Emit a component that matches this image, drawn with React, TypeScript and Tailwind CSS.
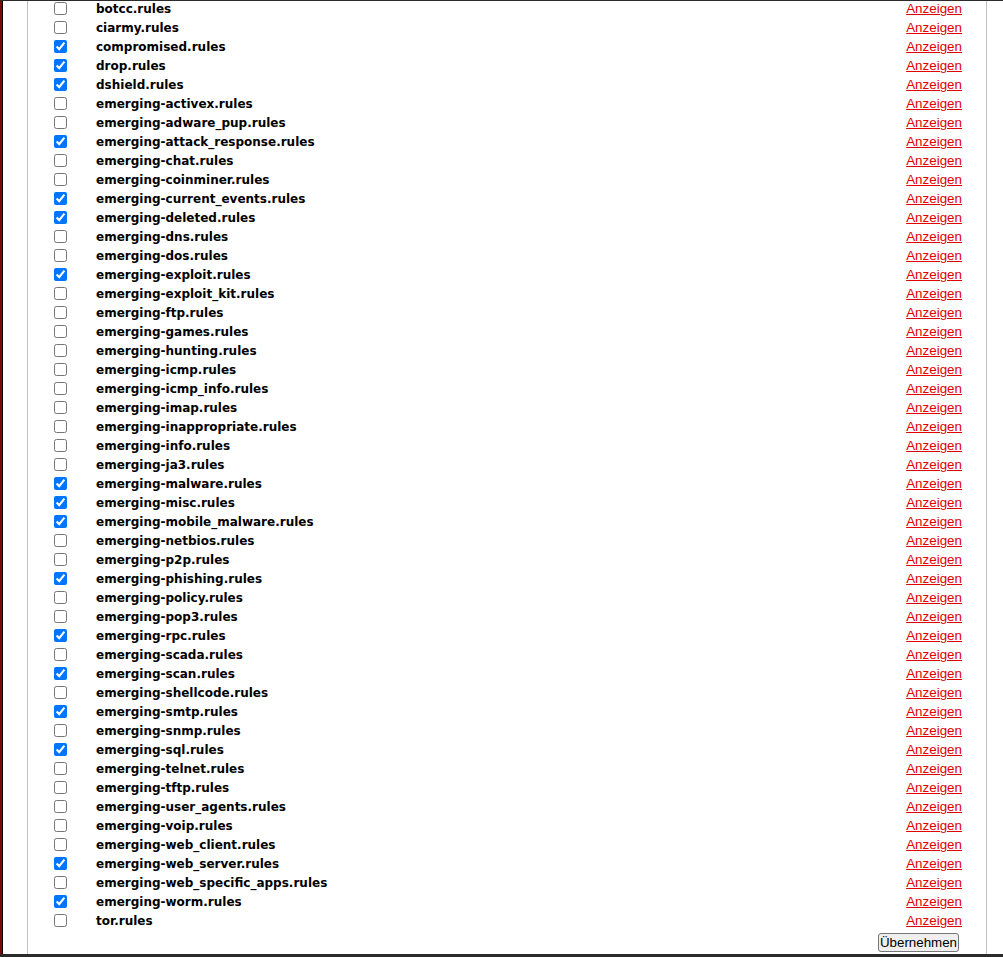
const rules: [string, boolean][] = [
  ['botcc', false],
  ['ciarmy', false],
  ['compromised', true],
  ['drop', true],
  ['dshield', true],
  ['emerging-activex', false],
  ['emerging-adware_pup', false],
  ['emerging-attack_response', true],
  ['emerging-chat', false],
  ['emerging-coinminer', false],
  ['emerging-current_events', true],
  ['emerging-deleted', true],
  ['emerging-dns', false],
  ['emerging-dos', false],
  ['emerging-exploit', true],
  ['emerging-exploit_kit', false],
  ['emerging-ftp', false],
  ['emerging-games', false],
  ['emerging-hunting', false],
  ['emerging-icmp', false],
  ['emerging-icmp_info', false],
  ['emerging-imap', false],
  ['emerging-inappropriate', false],
  ['emerging-info', false],
  ['emerging-ja3', false],
  ['emerging-malware', true],
  ['emerging-misc', true],
  ['emerging-mobile_malware', true],
  ['emerging-netbios', false],
  ['emerging-p2p', false],
  ['emerging-phishing', true],
  ['emerging-policy', false],
  ['emerging-pop3', false],
  ['emerging-rpc', true],
  ['emerging-scada', false],
  ['emerging-scan', true],
  ['emerging-shellcode', false],
  ['emerging-smtp', true],
  ['emerging-snmp', false],
  ['emerging-sql', true],
  ['emerging-telnet', false],
  ['emerging-tftp', false],
  ['emerging-user_agents', false],
  ['emerging-voip', false],
  ['emerging-web_client', false],
  ['emerging-web_server', true],
  ['emerging-web_specific_apps', false],
  ['emerging-worm', true],
  ['tor', false],
];

function App() {
  return (
    <div className="h-[957px] w-[1003px] flex flex-col bg-white overflow-hidden border-t border-[#2b2b2b]">
      <div className="flex-1 flex min-h-0 border-l-2 border-[#7a0a0a]">
        <div className="flex-1 flex min-h-0 border-l border-black">
          {/* Rule list panel */}
          <div className="ml-[24px] w-[960px] border-x border-[#c0c0c0] flex flex-col overflow-hidden">
            <div className="-mt-[2px] flex flex-col">
              {rules.map(([name, checked]) => (
                <div key={name} className="h-[19px] flex items-center pl-[26px] pr-[24px]">
                  <input
                    type="checkbox"
                    defaultChecked={checked}
                    className="m-0 w-[13px] h-[13px] shrink-0"
                  />
                  <span className="ml-[29px] flex-1 text-[12px] font-bold text-black font-['DejaVu_Sans',sans-serif]">
                    {name}.rules
                  </span>
                  <a
                    href="#"
                    className="mt-[2px] text-[13.4px] text-[#e00000] underline font-['Liberation_Sans',Arial,sans-serif]"
                  >
                    Anzeigen
                  </a>
                </div>
              ))}
            </div>
            <div className="flex justify-end pr-[27px] mt-[3px]">
              <button className="h-[19px] px-[1px] bg-[#efefef] border border-[#767676] rounded-[3px] text-[13.33px] leading-none text-black font-['Liberation_Sans',Arial,sans-serif]">
                Übernehmen
              </button>
            </div>
          </div>
        </div>
      </div>
      <div className="h-[3px] bg-[#2b2b2b]" />
    </div>
  );
}

export default App;
